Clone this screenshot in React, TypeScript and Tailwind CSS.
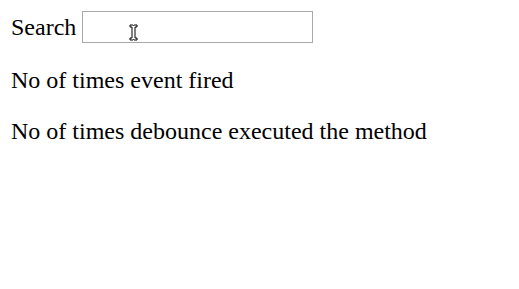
import React, { useState } from "react";

export default function App() {
  const [query, setQuery] = useState<string>("");

  return (
    <div className="relative min-h-[289px] bg-white px-[11px] pt-[11px] text-[24px] text-black [font-family:'Liberation_Serif',serif]">
      <div className="flex items-center gap-[6px] leading-[32px]">
        <span className="-mt-[1px]">Search</span>
        <input
          type="text"
          value={query}
          onChange={(e) => setQuery(e.target.value)}
          className="h-[32px] w-[231px] border border-[#a9a9a9] bg-white px-1 outline-none"
        />
      </div>
      <p className="mt-[24px] leading-[26px]">No of times event fired</p>
      <p className="mt-[25px] leading-[26px]">No of times debounce executed the method</p>

      {/* mouse cursor over the input */}
      <svg className="absolute left-[129px] top-[24px]" width="9" height="17" viewBox="0 0 9 17">
        <path d="M1 1h3l.5.5.5-.5h3v2H6v11h2v2H5l-.5-.5-.5.5H1v-2h2V3H1z" fill="white" stroke="black" strokeWidth="1" />
      </svg>
    </div>
  );
}
